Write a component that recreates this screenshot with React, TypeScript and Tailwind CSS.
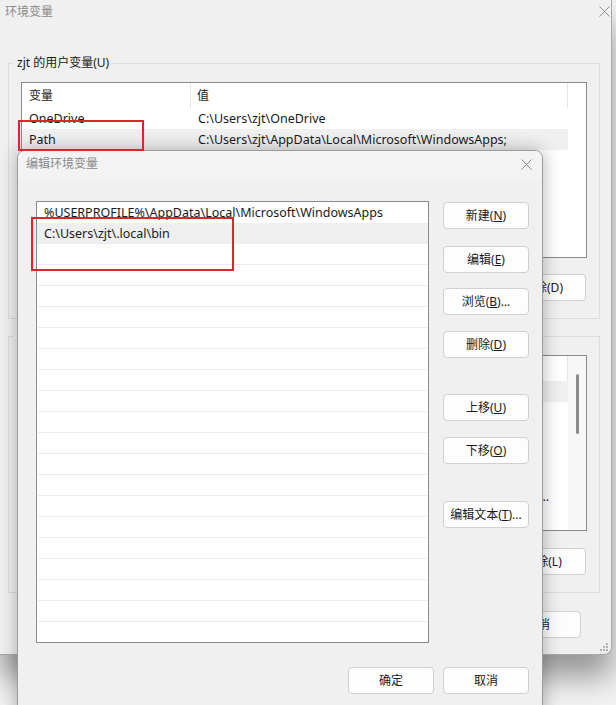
import type { ReactNode } from "react"

const userVars = [
  ["OneDrive", "C:\\Users\\zjt\\OneDrive"],
  ["Path", "C:\\Users\\zjt\\AppData\\Local\\Microsoft\\WindowsApps;"],
  ["TEMP", "%USERPROFILE%\\AppData\\Local\\Temp"],
  ["TMP", "%USERPROFILE%\\AppData\\Local\\Temp"],
]

const systemVars = [
  ["ComSpec", "C:\\Windows\\system32\\cmd.exe"],
  ["DriverData", "C:\\Windows\\System32\\Drivers\\DriverData"],
  ["JAVA_HOME", "C:\\Program Files\\Java\\jdk-17"],
  ["NUMBER_OF_PROCESSORS", "16"],
  ["OS", "Windows_NT"],
  [
    "Path",
    "C:\\Windows\\system32;C:\\Windows;C:\\Windows\\System32\\Wbem;C:\\Windows\\System32\\WindowsPowerShell\\v1.0\\;C:\\Windows\\System32\\OpenSSH\\",
  ],
  ["PATHEXT", ".COM;.EXE;.BAT;.CMD;.VBS;.VBE;.JS;.JSE;.WSF;.WSH;.MSC"],
  ["PROCESSOR_ARCHITECTURE", "AMD64"],
]

const pathEntries = [
  "%USERPROFILE%\\AppData\\Local\\Microsoft\\WindowsApps",
  "C:\\Users\\zjt\\.local\\bin",
]

function Btn({ children, className = "" }: { children: ReactNode; className?: string }) {
  return (
    <button
      className={`h-[27px] w-[86px] shrink-0 rounded-[4px] border border-[#d0d0d0] bg-[#fdfdfd] text-[12px] leading-[16px] text-[#1a1a1a] ${className}`}
    >
      {children}
    </button>
  )
}

function CloseX() {
  return (
    <svg width="11" height="11" viewBox="0 0 11 11" className="shrink-0">
      <path d="M0.5 0.5 L10.5 10.5 M10.5 0.5 L0.5 10.5" stroke="#8c8c8c" strokeWidth="1" />
    </svg>
  )
}

function Grip() {
  return (
    <svg width="8" height="8" viewBox="0 0 8 8">
      <rect x="6" y="0" width="2" height="2" fill="#b4b4b4" />
      <rect x="3" y="3" width="2" height="2" fill="#b4b4b4" />
      <rect x="6" y="3" width="2" height="2" fill="#b4b4b4" />
      <rect x="0" y="6" width="2" height="2" fill="#b4b4b4" />
      <rect x="3" y="6" width="2" height="2" fill="#b4b4b4" />
      <rect x="6" y="6" width="2" height="2" fill="#b4b4b4" />
    </svg>
  )
}

function VarList({ rows, selected, scroll }: { rows: string[][]; selected: number; scroll?: boolean }) {
  return (
    <div className="flex h-[176px] w-[566px] border border-[#8a8a94] bg-white">
      <div className="flex w-[547px] flex-col overflow-hidden">
        <div className="flex h-[25px] shrink-0 items-center">
          <div className="h-full w-[169px] border-r border-[#e5e5e5] pl-[7px] leading-[25px]">变量</div>
          <div className="h-full flex-1 border-r border-[#e5e5e5] pl-[6px] leading-[25px]">值</div>
        </div>
        {rows.map((r, i) => (
          <div
            key={i}
            className={`flex h-[21px] shrink-0 items-center text-[12.5px] ${i === selected ? "bg-[#f0f0f0]" : ""}`}
          >
            <div className="w-[170px] truncate pl-[7px]">{r[0]}</div>
            <div className="flex-1 truncate pl-[6px] pr-[10px]">{r[1]}</div>
          </div>
        ))}
      </div>
      <div className={`flex w-[18px] justify-center ${scroll ? "bg-[#f7f7f7]" : ""}`}>
        {scroll && <div className="mt-[18px] h-[60px] w-[3px] rounded-full bg-[#8b8b8b]" />}
      </div>
    </div>
  )
}

function BackWindow() {
  return (
    <div className="absolute left-0 top-0 flex h-[655px] w-[612px] flex-col rounded-br-[8px] border-b border-r border-[#a8a8a8] bg-[#f0f0f0] shadow-[0_22px_30px_rgba(0,0,0,0.38)]">
      <div className="flex h-[23px] items-center justify-between pl-[5px] pr-[1px]">
        <span className="text-[#8a8a8a]">环境变量</span>
        <CloseX />
      </div>
      <fieldset className="mx-[8px] mt-[32px] w-[592px] border border-[#dcdcdc] px-[12px] pb-[17px] pt-[11px]">
        <legend className="ml-[-8px] px-[4px] leading-[16px]">zjt 的用户变量(U)</legend>
        <VarList rows={userVars} selected={1} />
        <div className="mt-[16px] flex justify-end gap-[10px] pr-[1px]">
          <Btn>新建(<u>N</u>)...</Btn>
          <Btn>编辑(<u>E</u>)...</Btn>
          <Btn>删除(D)</Btn>
        </div>
      </fieldset>
      <fieldset className="mx-[8px] mt-[9px] w-[592px] border border-[#dcdcdc] px-[12px] pb-[17px] pt-[11px]">
        <legend className="ml-[-8px] px-[4px] leading-[16px]">系统变量(S)</legend>
        <VarList rows={systemVars} selected={0} scroll />
        <div className="mt-[17px] flex justify-end gap-[10px] pr-[1px]">
          <Btn>新建(<u>W</u>)...</Btn>
          <Btn>编辑(<u>I</u>)...</Btn>
          <Btn>删除(L)</Btn>
        </div>
      </fieldset>
      <div className="mt-[18px] flex justify-end gap-[10px] pr-[30px]">
        <Btn>确定</Btn>
        <Btn>取消</Btn>
      </div>
      <div className="mt-auto flex justify-end pb-[3px] pr-[3px]">
        <Grip />
      </div>
    </div>
  )
}

function EditDialog() {
  return (
    <div className="absolute left-[17px] top-[150px] flex h-[570px] w-[526px] flex-col overflow-hidden rounded-t-[8px] border border-[#9c9c9c] bg-[#f0f0f0] shadow-[0_0_18px_rgba(0,0,0,0.3)]">
      <div className="flex h-[29px] shrink-0 items-start justify-between bg-[#f3f3f3] pl-[8px] pr-[10px] pt-[5px]">
        <span className="text-[#8a8a8a]">编辑环境变量</span>
        <span className="pt-[3px]">
          <CloseX />
        </span>
      </div>
      <div className="flex pl-[18px] pr-[13px] pt-[21px]">
        <div className="flex h-[442px] w-[393px] flex-col overflow-hidden border border-[#8a8a94] bg-white">
          {Array.from({ length: 21 }).map((_, i) => (
            <div
              key={i}
              className={`flex h-[21px] shrink-0 items-center pl-[7px] text-[12.5px] ${i === 1 ? "bg-[#efefef]" : ""} ${
                i >= 2 ? "mx-[1px] border-b border-[#ebebeb]" : ""
              }`}
            >
              <span className="whitespace-nowrap">{pathEntries[i] ?? ""}</span>
            </div>
          ))}
        </div>
        <div className="ml-[14px] flex flex-col pt-[1px]">
          <Btn>新建(<u>N</u>)</Btn>
          <Btn className="mt-[17px]">编辑(<u>E</u>)</Btn>
          <Btn className="mt-[15px]">浏览(<u>B</u>)...</Btn>
          <Btn className="mt-[16px]">删除(<u>D</u>)</Btn>
          <Btn className="mt-[36px]">上移(<u>U</u>)</Btn>
          <Btn className="mt-[16px]">下移(<u>O</u>)</Btn>
          <Btn className="mt-[37px]">编辑文本(<u>T</u>)...</Btn>
        </div>
      </div>
      <div className="mt-[24px] flex justify-end gap-[9px] pr-[13px]">
        <Btn>确定</Btn>
        <Btn>取消</Btn>
      </div>
    </div>
  )
}

export default function App() {
  return (
    <div className="relative h-[705px] w-[616px] overflow-hidden bg-[#f2f2f2] font-['Noto_Sans','Noto_Sans_CJK_SC',sans-serif] text-[12px] leading-[16px] text-[#1a1a1a]">
      <BackWindow />
      <EditDialog />
      <div className="absolute left-[18px] top-[120px] h-[31px] w-[126px] border-2 border-[#e3232b]" />
      <div className="absolute left-[31px] top-[217px] h-[54px] w-[203px] border-2 border-[#e3232b]" />
    </div>
  )
}
